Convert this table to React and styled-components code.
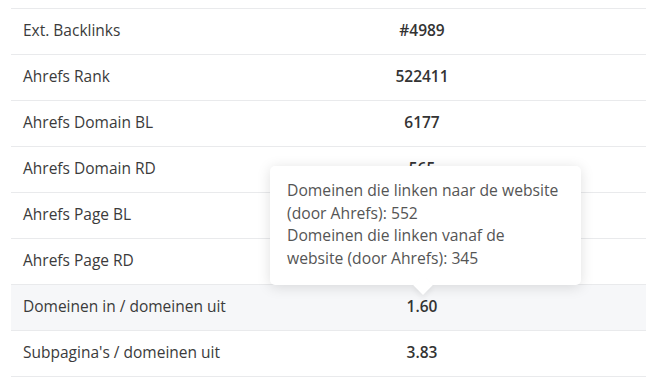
import React from "react";
import styled, { createGlobalStyle } from "styled-components";

const Global = createGlobalStyle`
  html, body { margin: 0; padding: 0; background: #fff; }
  body { font-family: "Open Sans", "Noto Sans", sans-serif; overflow: hidden; }
`;

const Page = styled.div`
  padding: 8px 0 0 11px;
  width: 646px;
  box-sizing: border-box;
`;

const Table = styled.div`
  position: relative;
  border-top: 1px solid #e9eaec;
`;

const Row = styled.div`
  display: grid;
  grid-template-columns: 187px 448px;
  height: 46px;
  box-sizing: border-box;
  padding-bottom: 4px;
  border-bottom: 1px solid #e9eaec;
  align-items: center;
  background: ${(p) => (p.$active ? "#f6f7f9" : "#fff")};
`;

const Label = styled.div`
  padding-left: 12px;
  font-size: 15.5px;
  color: #3b3b3b;
  white-space: nowrap;
`;

const Value = styled.div`
  text-align: center;
  font-size: 15.5px;
  font-weight: 600;
  color: #333;
`;

const Tooltip = styled.div`
  position: absolute;
  left: 259px;
  top: 157px;
  width: 311px;
  box-sizing: border-box;
  padding: 13px 19px 15px 17px;
  background: #fff;
  border-radius: 5px;
  box-shadow: 0 2px 14px rgba(0, 0, 0, 0.13);
  font-size: 15.7px;
  line-height: 22.7px;
  color: #555;
  &::after {
    content: "";
    position: absolute;
    left: 146px;
    bottom: -7px;
    width: 14px;
    height: 14px;
    background: #fff;
    transform: rotate(45deg);
    box-shadow: 3px 3px 5px rgba(0, 0, 0, 0.05);
  }
`;

const rows = [
  ["Ext. Backlinks", "#4989"],
  ["Ahrefs Rank", "522411"],
  ["Ahrefs Domain BL", "6177"],
  ["Ahrefs Domain RD", "565"],
  ["Ahrefs Page BL", ""],
  ["Ahrefs Page RD", ""],
  ["Domeinen in / domeinen uit", "1.60", true],
  ["Subpagina's / domeinen uit", "3.83"],
];

export default function App() {
  return (
    <>
      <Global />
      <Page>
        <Table>
          {rows.map(([l, v, a]) => (
            <Row key={l} $active={a}>
              <Label>{l}</Label>
              <Value>{v}</Value>
            </Row>
          ))}
          <Tooltip>
            Domeinen die linken naar de website (door Ahrefs): 552
            <br />
            Domeinen die linken vanaf de website (door Ahrefs): 345
          </Tooltip>
        </Table>
      </Page>
    </>
  );
}
